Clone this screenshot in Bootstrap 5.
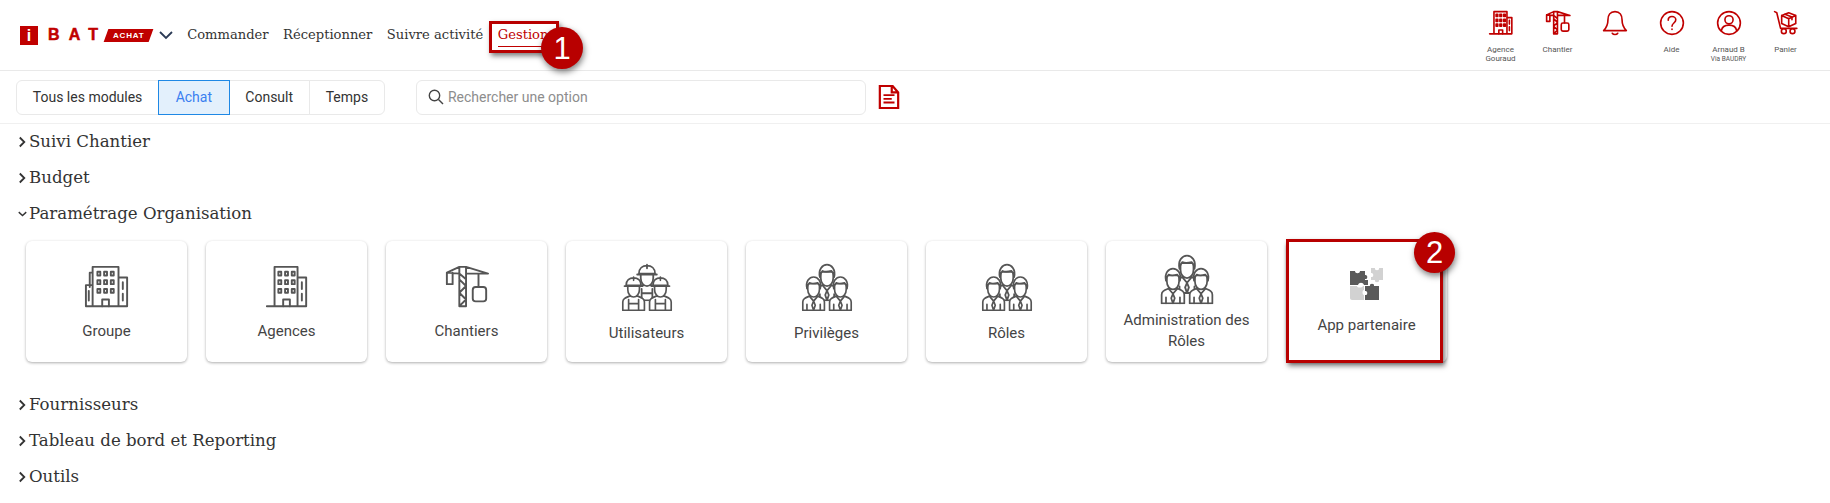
<!DOCTYPE html>
<html lang="fr">
<head>
<meta charset="utf-8">
<title>iBAT Achat</title>
<link href="https://cdn.jsdelivr.net/npm/bootstrap@5.3.0/dist/css/bootstrap.min.css" rel="stylesheet">
<style>
html,body{height:503px;overflow:hidden}
body{font-family:Roboto,"Liberation Sans",sans-serif;color:#333;background:#fff;position:relative}
.top-bar{height:71px;border-bottom:1px solid #e9e9e9;padding:0 16px 0 20px}
.logo-i{width:18px;height:19px;background:#c00000;color:#fff;font:700 16px/19px "Liberation Sans",sans-serif;text-align:center}
.logo-bat{color:#c00000;font:900 16px/18px "Liberation Sans",sans-serif;-webkit-text-stroke:.5px #c00000;letter-spacing:9.2px;margin-left:10px;white-space:nowrap}
.logo-tag{background:#c00000;color:#fff;font:700 8px/13px "Liberation Sans",sans-serif;letter-spacing:.8px;padding:0 7px;transform:skewX(-20deg);margin-left:-1px}
.logo-tag>span{display:block;transform:skewX(20deg)}
.logo-cv{margin-left:7px}
.nav-slab{font-family:"DejaVu Serif",serif;font-size:13.1px;color:#333;text-decoration:none;white-space:nowrap;margin-left:14.500px}
.nav-cur{color:#c00000;border-bottom:1px solid #c00000;padding-bottom:1px;margin-top:2px}
.tool-item{--sw:3;width:57px;height:60px;color:#555;font-size:8px;line-height:9px;text-align:center;padding-top:5px}
.tool-item svg{display:block;margin:0 auto 9px}
.tool-sub{font-size:6.5px}
.bar-two{height:53px;border-bottom:1px solid #f0f0f0;padding-left:16px}
.mod-group .btn{font-size:14px;color:#333;background:#fff;border:1px solid #e9e9e9;height:35px;padding:0 15.8px;line-height:31px}
.mod-group .btn.mod-on{background:#e3f0fc;border-color:#1e88e5;color:#3a7ff0;z-index:2;padding:0 16.500px}
.search-box{width:450px;height:35px;margin-left:31px;border:1px solid #e9e9e9;border-radius:6px;padding:0 8px 0 11px}
.search-box input{border:0;outline:0;padding:0;font-size:14px;color:#333;width:100%;background:transparent}
.search-box input::placeholder{color:#8d8d8d}
.search-box svg{flex:none}
.doc-ico{margin-left:12px}
.sec-head{height:36px;padding-left:18px;font-family:"DejaVu Serif",serif;font-size:16.600px;color:#333}
.sec-head svg{margin-right:2px;flex:none}
.tile-row{padding:9px 0 25px 26px;gap:19px}
.tile{--sw:2;width:161px;height:121px;border:0;border-radius:6px;box-shadow:0 1px 3px rgba(0,0,0,.32);background:#fff;color:#444;font-size:15px;line-height:21px;text-align:center;padding:3px 6px 0}
.tile svg{display:block;margin:0 auto 11px}
.tile.tile-team{padding-top:2px}
.tile.tile-two{padding-top:0}
.tile.tile-two svg{margin-bottom:4px}
.tile.tile-app{padding-top:0}
.tile.tile-app svg{margin-bottom:14px}
.mark-box{position:absolute;border:3px solid #b80000;box-shadow:2px 3px 5px rgba(0,0,0,.5);pointer-events:none}
.mark-dot{position:absolute;border-radius:50%;background:#b80000;color:#fff;font:400 31px/1 "Liberation Sans",sans-serif;display:flex;align-items:center;justify-content:center;box-shadow:1px 3px 6px rgba(0,0,0,.5)}
.ln{fill:none;stroke:currentColor;stroke-width:var(--sw,2);stroke-linejoin:round;stroke-linecap:round}
.ln-w{fill:#fff;stroke:currentColor;stroke-width:var(--sw,2);stroke-linejoin:round;stroke-linecap:round}
.ico-red{color:#c00000}
.ico-grey{color:#555}
</style>
</head>
<body>
<svg width="0" height="0" class="position-absolute">
  <defs>
    <symbol id="bld" viewBox="0 0 48 48">
      <path class="ln" d="M11 3h24v41H11zM35 14h9v30h-9M3 44h41"/>
      <path class="ln" d="M20 44v-7h7v7M39.500 19v7M39.500 31v7"/>
      <path class="ln" d="M15 8h3v4h-3zM22 8h3v4h-3zM29 8h3v4h-3zM15 17h3v4h-3zM22 17h3v4h-3zM29 17h3v4h-3zM15 26h3v4h-3zM22 26h3v4h-3zM29 26h3v4h-3z"/>
    </symbol>
    <symbol id="bld2" viewBox="0 0 48 48">
      <path class="ln" d="M9 3h27v41H9zM36 14h9v30h-9M9 9H6v15M9 22H2v22h43M5 28v10"/>
      <path class="ln" d="M19 44v-7h7v7M40.500 19v7M40.500 31v7"/>
      <path class="ln" d="M14 8h3v4h-3zM21 8h3v4h-3zM28 8h3v4h-3zM14 17h3v4h-3zM21 17h3v4h-3zM28 17h3v4h-3zM14 26h3v4h-3zM21 26h3v4h-3zM28 26h3v4h-3z"/>
    </symbol>
    <symbol id="crn" viewBox="0 0 48 48">
      <path class="ln" d="M16 3h7v41h-7zM16 10 3 9v12h6V9M23 3l23 7H23M16 3 3 9M36 10v14M16 16l7 7-7 7 7 7-7 7M16 10l7 6"/>
      <rect class="ln" x="30" y="24" width="14" height="15" rx="3"/>
    </symbol>
    <symbol id="bell" viewBox="0 0 48 48">
      <path class="ln" d="M24 3c-9 0-13 7-13 15 0 9-2 14-8 20h42c-6-6-8-11-8-20 0-8-4-15-13-15zM19 43c2 3 8 3 10 0"/>
    </symbol>
    <symbol id="help" viewBox="0 0 48 48">
      <circle class="ln" cx="24" cy="24" r="21"/>
      <path class="ln" d="M17 19c0-5 3-7 7-7s7 3 7 6c0 6-7 6-7 12M24 35v1"/>
    </symbol>
    <symbol id="usr" viewBox="0 0 48 48">
      <circle class="ln" cx="24" cy="24" r="21"/>
      <circle class="ln" cx="24" cy="18" r="7.500"/>
      <path class="ln" d="M10 38c1-7 6-10 14-10s13 3 14 10"/>
    </symbol>
    <symbol id="cart" viewBox="0 0 48 48">
      <path class="ln" d="M3 3l4 2 7 29h30"/>
      <circle class="ln" cx="20" cy="39" r="4.500"/><circle class="ln" cx="36" cy="39" r="4.500"/>
      <path class="ln" d="M29 5l13 5v15l-13 6-13-6V10zM16 10l13 6 13-6M29 16v15"/>
      <path class="ln" d="M22 8l13 5v5"/>
    </symbol>
    <symbol id="doc" viewBox="0 0 24 28">
      <path fill="none" stroke="currentColor" stroke-width="2.400" d="M2 2h14l6 7v17H2zM15 2v7h7"/>
      <path fill="none" stroke="currentColor" stroke-width="2" d="M6 12h12M6 16h9M6 20h12"/>
    </symbol>
    <symbol id="worker" viewBox="0 0 30 44">
      <path class="ln-w" d="M2 43V33c0-4 3-5 8-7h10c5 2 8 3 8 7v10z"/>
      <path class="ln-w" d="M8 13v5c0 5 3 9 7 9s7-4 7-9v-5z"/>
      <path class="ln-w" d="M6 13c0-6 4-9 9-9s9 3 9 9zM4 14h22M15 3v4"/>
      <path class="ln" d="M9 30v13M21 30v13M9 35h12"/>
    </symbol>
    <symbol id="person" viewBox="0 0 30 44">
      <path class="ln-w" d="M2 43V33c0-4 3-5 8-7h10c5 2 8 3 8 7v10z"/>
      <path class="ln-w" d="M8 11v7c0 5 3 9 7 9s7-4 7-9v-7z"/>
      <path class="ln-w" d="M7 17c-2-9 3-14 8-14s10 5 8 14c0-4-2-6-3-7-4 1-8 1-10 0-1 1-3 3-3 7z"/>
      <path class="ln" d="M10 26l5 6 5-6M15 32l-2 5 2 6 2-6zM7 36v7M23 36v7"/>
    </symbol>
    <symbol id="team" viewBox="0 0 62 56">
      <use href="#person" x="16" y="0" width="30" height="44"/>
      <use href="#person" x="2" y="14" width="28" height="41"/>
      <use href="#person" x="32" y="14" width="28" height="41"/>
    </symbol>
    <symbol id="crew" viewBox="0 0 62 56">
      <use href="#worker" x="16" y="0" width="30" height="44"/>
      <use href="#worker" x="2" y="14" width="28" height="41"/>
      <use href="#worker" x="32" y="14" width="28" height="41"/>
    </symbol>
    <symbol id="puz" viewBox="0 0 34 34">
      <path fill="#d2d2d2" d="M21 1h4c-1 3 5 3 4 0h4v12h-4c1 3-5 3-4 0h-4v-3c3 1 3-5 0-4z"/>
      <path fill="#5a5a5a" d="M0 4h5c0 3 5 3 5 0h5v4c3-1 3 5 0 4v1h3v5h-4c-1-3-5-3-6 0H0z"/>
      <path fill="#d2d2d2" d="M0 19h7c0 2 5 2 6 0h1v4c-2 0-2 5 0 5v5H2c-1 0-2-1-2-2z"/>
      <path fill="#5a5a5a" d="M16 19h4c-1-3 5-3 4 0h5v14H15v-5c3 1 3-5 0-4v-5z"/>
    </symbol>
    <symbol id="cv-r" viewBox="0 0 10 12"><path d="M2 1l5 5-5 5" fill="none" stroke="#333" stroke-width="2"/></symbol>
    <symbol id="cv-d" viewBox="0 0 12 10"><path d="M1 2.500l5 4.500 5-4.500" fill="none" stroke="#333" stroke-width="1.800"/></symbol>
  </defs>
</svg>

<header class="top-bar d-flex align-items-center">
  <div class="d-flex align-items-center">
    <span class="logo-i">i</span>
    <span class="logo-bat">BAT</span>
    <span class="logo-tag"><span>ACHAT</span></span>
    <svg class="logo-cv" width="14" height="9" viewBox="0 0 14 9"><path d="M1 1l6 6 6-6" fill="none" stroke="#2b3a55" stroke-width="1.800"/></svg>
  </div>
  <nav class="d-flex align-items-center">
    <a class="nav-slab" href="#">Commander</a>
    <a class="nav-slab" href="#">Réceptionner</a>
    <a class="nav-slab" href="#">Suivre activité</a>
    <a class="nav-slab nav-cur" href="#">Gestion</a>
  </nav>
  <div class="d-flex ms-auto ico-red">
    <div class="tool-item"><svg class="ico-red" width="26" height="26"><use href="#bld"/></svg>Agence<br>Gouraud</div>
    <div class="tool-item"><svg class="ico-red" width="26" height="26"><use href="#crn"/></svg>Chantier</div>
    <div class="tool-item"><svg class="ico-red" width="26" height="26"><use href="#bell"/></svg></div>
    <div class="tool-item"><svg class="ico-red" width="26" height="26"><use href="#help"/></svg>Aide</div>
    <div class="tool-item"><svg class="ico-red" width="26" height="26"><use href="#usr"/></svg>Arnaud B<br><span class="tool-sub">Via BAUDRY</span></div>
    <div class="tool-item"><svg class="ico-red" width="26" height="26"><use href="#cart"/></svg>Panier</div>
  </div>
</header>

<div class="bar-two d-flex align-items-center">
  <div class="btn-group mod-group" role="group">
    <button type="button" class="btn">Tous les modules</button>
    <button type="button" class="btn mod-on">Achat</button>
    <button type="button" class="btn">Consult</button>
    <button type="button" class="btn">Temps</button>
  </div>
  <div class="search-box d-flex align-items-center gap-1">
    <svg width="16" height="16" viewBox="0 0 16 16"><circle cx="6.500" cy="6.500" r="5.200" fill="none" stroke="#444" stroke-width="1.400"/><path d="M10.500 10.500l4.500 4.500" stroke="#444" stroke-width="1.400"/></svg>
    <input type="text" placeholder="Rechercher une option">
  </div>
  <svg class="doc-ico ico-red" width="22" height="26"><use href="#doc"/></svg>
</div>

<main>
  <div class="sec-head d-flex align-items-center"><svg width="9" height="12"><use href="#cv-r"/></svg>Suivi Chantier</div>
  <div class="sec-head d-flex align-items-center"><svg width="9" height="12"><use href="#cv-r"/></svg>Budget</div>
  <div class="sec-head d-flex align-items-center"><svg width="9" height="12"><use href="#cv-d"/></svg>Paramétrage Organisation</div>
  <div class="tile-row d-flex">
    <div class="card tile justify-content-center"><svg class="ico-grey" width="48" height="46"><use href="#bld2"/></svg>Groupe</div>
    <div class="card tile justify-content-center"><svg class="ico-grey" width="48" height="46"><use href="#bld"/></svg>Agences</div>
    <div class="card tile justify-content-center"><svg class="ico-grey" width="48" height="46"><use href="#crn"/></svg>Chantiers</div>
    <div class="card tile tile-team justify-content-center"><svg class="ico-grey" width="56" height="50"><use href="#crew"/></svg>Utilisateurs</div>
    <div class="card tile tile-team justify-content-center"><svg class="ico-grey" width="56" height="50"><use href="#team"/></svg>Privilèges</div>
    <div class="card tile tile-team justify-content-center"><svg class="ico-grey" width="56" height="50"><use href="#team"/></svg>Rôles</div>
    <div class="card tile tile-two justify-content-center"><svg class="ico-grey" width="58" height="54"><use href="#team"/></svg>Administration des Rôles</div>
    <div class="card tile tile-app justify-content-center"><svg width="34" height="34"><use href="#puz"/></svg>App partenaire</div>
  </div>
  <div class="sec-head d-flex align-items-center"><svg width="9" height="12"><use href="#cv-r"/></svg>Fournisseurs</div>
  <div class="sec-head d-flex align-items-center"><svg width="9" height="12"><use href="#cv-r"/></svg>Tableau de bord et Reporting</div>
  <div class="sec-head d-flex align-items-center"><svg width="9" height="12"><use href="#cv-r"/></svg>Outils</div>
</main>

<div class="mark-box" style="left:489px;top:21px;width:70px;height:32px"></div>
<div class="mark-dot" style="left:541px;top:27px;width:42px;height:42px">1</div>
<div class="mark-box" style="left:1286px;top:239px;width:157px;height:124px"></div>
<div class="mark-dot" style="left:1414px;top:232px;width:41px;height:41px">2</div>
</body>
</html>
